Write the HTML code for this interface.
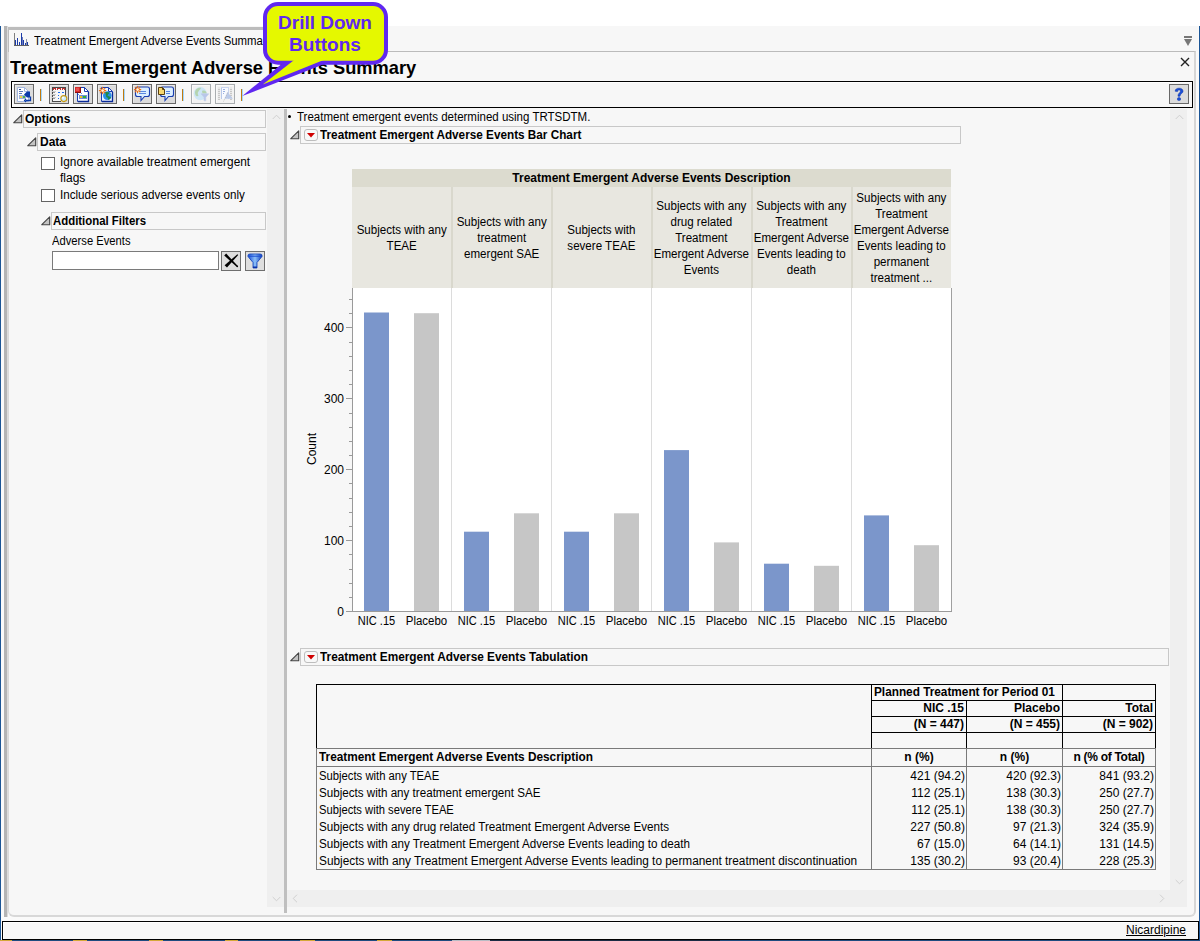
<!DOCTYPE html>
<html><head><meta charset="utf-8">
<style>
*{box-sizing:border-box;margin:0;padding:0}
html,body{width:1200px;height:941px;overflow:hidden;background:#fff;font-family:"Liberation Sans",sans-serif;font-size:12px;color:#000}
.a{position:absolute}
.t{position:absolute;white-space:nowrap;line-height:16px}
.b{font-weight:bold}
.hb{position:absolute;border:1px solid #c8c8c8;background:#f7f7f7}
.tri{position:absolute;width:0;height:0}
.btn{position:absolute;width:20px;height:20px;border:1px solid #7a7a7a;background:#dcdcdc}
.btnd{border-color:#b8b8b8;background:#ededed}
.sep{position:absolute;width:2px;height:13px;background:#c08020;top:89px}
</style></head>
<body>
<!-- window edges -->
<div class="a" style="left:0;top:26px;width:1px;height:915px;background:#1b5596"></div>
<div class="a" style="left:1199px;top:26px;width:1px;height:915px;background:#1b5596"></div>
<div class="a" style="left:1px;top:26px;width:1198px;height:915px;background:#fafafa"></div>
<div class="a" style="left:4px;top:26px;width:3px;height:891px;background:#b4b4b4"></div>
<div class="a" style="left:7px;top:26px;width:1px;height:891px;background:#dcdcdc"></div>
<!-- tab strip background -->
<div class="a" style="left:8px;top:26px;width:1190px;height:25px;background:#f7f7f7"></div>
<!-- main panel -->
<div class="a" style="left:8px;top:51px;width:1188px;height:866px;background:#f7f7f7;border:1px solid #dadada;border-top-color:#bbb;border-right:2px solid #d6d6d6;border-bottom:2px solid #d8d8d8;border-radius:0 0 6px 6px"></div>
<!-- tab -->
<div class="a" style="left:8px;top:27px;width:262px;height:25px;background:#f7f7f7;border-top:3px solid #bcbcbc;border-left:1px solid #bcbcbc"></div>
<svg class="a" style="left:14px;top:33px" width="16" height="13" viewBox="14 33 16 13"><rect x="14" y="33" width="1" height="13" fill="#808080"/><rect x="14" y="45" width="15" height="1" fill="#606060"/><rect x="15" y="40" width="1" height="5" fill="#1a3aa8"/><rect x="17" y="38" width="1" height="7" fill="#1a3aa8"/><rect x="19" y="42" width="1" height="3" fill="#1a3aa8"/><rect x="21" y="33" width="1" height="12" fill="#1a3aa8"/><rect x="22" y="37" width="1" height="8" fill="#6a7ab8"/><rect x="23" y="40" width="1" height="5" fill="#1a3aa8"/><rect x="25" y="43" width="1" height="2" fill="#1a3aa8"/><rect x="26" y="39" width="1" height="6" fill="#8a92a8"/><rect x="27" y="42" width="1" height="3" fill="#1a3aa8"/></svg>
<div class="t" style="left:34px;top:33px;transform:scaleX(0.95);transform-origin:0 0">Treatment Emergent Adverse Events Summary</div>
<!-- tab dropdown -->
<div class="a" style="left:1184px;top:36px;width:8px;height:2px;background:#777"></div>
<div class="tri" style="left:1184px;top:39px;border-left:4px solid transparent;border-right:4px solid transparent;border-top:7px solid #777"></div>

<!-- title -->
<div class="t b" style="left:10px;top:58px;font-size:19px;line-height:20px;transform:scaleX(0.961);transform-origin:0 0">Treatment Emergent Adverse Events Summary</div>
<!-- close x -->
<svg class="a" style="left:1180px;top:57px" width="10" height="10" viewBox="0 0 10 10"><path d="M1 1L9 9M9 1L1 9" stroke="#222" stroke-width="1.4"/></svg>

<!-- toolbar -->
<div class="a" style="left:11px;top:81px;width:1182px;height:27px;border:1px solid #000;box-shadow:inset 1px 1px 0 #fff;background:#f7f7f7"></div>
<svg class="a" style="left:14px;top:84px" width="20" height="20" viewBox="0 0 20 20"><rect x="0.5" y="0.5" width="19" height="19" fill="#dcdcdc" stroke="#686868"/><path d="M1.5 18.5V1.5H18.5" fill="none" stroke="#e9e9e9"/><path d="M3.5 3.5H10.5L14.5 7.5V17.5H3.5Z" fill="#fff" stroke="#a4b8e0"/><path d="M10.5 3.5V7.5H14.5" fill="none" stroke="#a4b8e0"/><g shape-rendering="crispEdges"><rect x="5" y="5" width="2" height="1" fill="#2a4a98"/><rect x="5" y="7" width="4" height="1" fill="#5a78b8"/><rect x="5" y="9" width="3" height="1" fill="#5a78b8"/><rect x="5" y="11" width="7" height="4" fill="#9fb2d8"/><rect x="6" y="12" width="2" height="2" fill="#f2d24a"/><rect x="9" y="12" width="2" height="2" fill="#4cb04c"/></g><path d="M10 10.5L13 7.5H16V13.5H13Z" fill="#0a3aa8"/><path d="M16.5 12.5V16.5H11.5" fill="none" stroke="#0a3aa8" stroke-width="1.3"/><path d="M12 15L10.5 16.5L12 18" fill="none" stroke="#0a3aa8" stroke-width="1.1"/></svg>
<div class="a" style="left:40px;top:89px;width:1px;height:12px;background:#c07a10"></div><div class="a" style="left:41px;top:89px;width:1px;height:12px;background:#9fd6ff"></div>
<svg class="a" style="left:49px;top:84px" width="20" height="20" viewBox="0 0 20 20"><rect x="0.5" y="0.5" width="19" height="19" fill="#dcdcdc" stroke="#686868"/><path d="M1.5 18.5V1.5H18.5" fill="none" stroke="#e9e9e9"/><g shape-rendering="crispEdges"><rect x="3" y="3" width="14" height="15" fill="#f6f6f6"/><path d="M3.5 18V3.5H16.5V12" fill="none" stroke="#4a4a4a"/><path d="M3.5 17.5H12" stroke="#4a4a4a"/><rect x="4" y="4" width="3" height="2" fill="#c03030"/><rect x="8" y="4" width="4" height="2" fill="#c03030"/><rect x="13" y="4" width="3" height="2" fill="#c03030"/><rect x="5" y="5" width="1" height="1" fill="#fff"/><rect x="9" y="5" width="2" height="1" fill="#fff"/><rect x="14" y="5" width="1" height="1" fill="#fff"/><rect x="4" y="8" width="2" height="1" fill="#999"/><rect x="4" y="11" width="2" height="1" fill="#999"/><rect x="4" y="14" width="2" height="1" fill="#999"/><rect x="3" y="7" width="4" height="1" fill="#ccc"/><rect x="3" y="10" width="4" height="1" fill="#ccc"/><rect x="3" y="13" width="4" height="1" fill="#ccc"/><rect x="9" y="8" width="2" height="1" fill="#1a6ef0"/><rect x="13" y="8" width="2" height="1" fill="#1a6ef0"/><rect x="9" y="11" width="1" height="1" fill="#1a6ef0"/><rect x="9" y="14" width="1" height="1" fill="#1a6ef0"/></g><circle cx="14.8" cy="14.6" r="3" fill="#c8ecff" stroke="#c89a10" stroke-width="1.1"/><circle cx="14" cy="13.8" r="1" fill="#fff"/></svg>
<svg class="a" style="left:73px;top:84px" width="20" height="20" viewBox="0 0 20 20"><rect x="0.5" y="0.5" width="19" height="19" fill="#dcdcdc" stroke="#686868"/><path d="M1.5 18.5V1.5H18.5" fill="none" stroke="#e9e9e9"/><path d="M4.5 3.5H11.5L15.5 7.5V17.5H4.5Z" fill="#fff" stroke="#1a3fb0"/><path d="M11.5 3.5V7.5H15.5" fill="none" stroke="#1a3fb0"/><path d="M15.5 8V17.5H5" fill="none" stroke="#0a2a98" stroke-width="1.3"/><g shape-rendering="crispEdges"><rect x="2" y="3" width="6" height="6" fill="#d42a2a"/><rect x="2" y="8" width="6" height="1" fill="#8a1010"/><rect x="7" y="3" width="1" height="6" fill="#8a1010"/><rect x="3" y="4" width="3" height="3" fill="#e85050"/><rect x="6" y="11" width="8" height="4" fill="#6d90d8"/><rect x="7" y="12" width="2" height="2" fill="#f2c020"/><rect x="10" y="12" width="3" height="2" fill="#30b030"/><rect x="8" y="9" width="1" height="1" fill="#6d90d8"/><rect x="5" y="10" width="1" height="1" fill="#6d90d8"/></g></svg>
<svg class="a" style="left:97px;top:84px" width="20" height="20" viewBox="0 0 20 20"><rect x="0.5" y="0.5" width="19" height="19" fill="#dcdcdc" stroke="#686868"/><path d="M1.5 18.5V1.5H18.5" fill="none" stroke="#e9e9e9"/><path d="M4.5 3.5H11.5L15.5 7.5V17.5H4.5Z" fill="#eef4ff" stroke="#1a3fb0"/><path d="M11.5 3.5V7.5H15.5" fill="none" stroke="#1a3fb0"/><path d="M15.5 8V17.5H5" fill="none" stroke="#0a2a98" stroke-width="1.3"/><circle cx="10.3" cy="11.6" r="4.3" fill="#2a90e8"/><path d="M8 8.3C9.5 7.6 11.3 7.8 12.5 8.8C12 10 11 10.3 10.5 11.5C11.5 12.5 13 12.2 14 13.5C13.5 15 12 15.8 11 15.8C11.5 14.5 10.8 13.5 9.5 13.2C8.5 12 9.2 10.5 8 8.3Z" fill="#1f8a4a"/><g stroke="#f07010" stroke-width="1.1" stroke-linecap="round"><path d="M5.6 3.3999999999999995V9.8M2.3999999999999995 6.6H8.8M3.3 4.3L7.8999999999999995 8.899999999999999M7.8999999999999995 4.3L3.3 8.899999999999999"/></g><circle cx="5.6" cy="6.6" r="1.3" fill="#fff4e0"/></svg>
<div class="a" style="left:123px;top:89px;width:1px;height:12px;background:#c07a10"></div><div class="a" style="left:124px;top:89px;width:1px;height:12px;background:#9fd6ff"></div>
<svg class="a" style="left:132px;top:84px" width="20" height="20" viewBox="0 0 20 20"><rect x="0.5" y="0.5" width="19" height="19" fill="#dcdcdc" stroke="#686868"/><path d="M1.5 18.5V1.5H18.5" fill="none" stroke="#e9e9e9"/><path d="M3.5 5C3.5 3.8 4.5 3 5.5 3H15.5C16.5 3 17.5 3.8 17.5 5V10.5C17.5 11.7 16.5 12.5 15.5 12.5H12.5L9 16.6V12.5H5.5C4.5 12.5 3.5 11.7 3.5 10.5Z" fill="#dcefff" stroke="#1a3fb0" stroke-width="1.1"/><g shape-rendering="crispEdges"><rect x="7" y="7" width="7" height="1" fill="#5a88e0"/><rect x="7" y="9" width="7" height="1" fill="#5a88e0"/></g><g stroke="#f07010" stroke-width="1.1" stroke-linecap="round"><path d="M5.6 2.3999999999999995V8.8M2.3999999999999995 5.6H8.8M3.3 3.3L7.8999999999999995 7.8999999999999995M7.8999999999999995 3.3L3.3 7.8999999999999995"/></g><circle cx="5.6" cy="5.6" r="1.3" fill="#fff4e0"/></svg>
<svg class="a" style="left:156px;top:84px" width="20" height="20" viewBox="0 0 20 20"><rect x="0.5" y="0.5" width="19" height="19" fill="#dcdcdc" stroke="#686868"/><path d="M1.5 18.5V1.5H18.5" fill="none" stroke="#e9e9e9"/><path d="M4.5 5C4.5 3.8 5.5 3 6.5 3H15.5C16.5 3 17.5 3.8 17.5 5V10.5C17.5 11.7 16.5 12.5 15.5 12.5H12.5L9 16.6V12.5H6.5C5.5 12.5 4.5 11.7 4.5 10.5Z" fill="#dcefff" stroke="#1a3fb0" stroke-width="1.1"/><g shape-rendering="crispEdges"><rect x="10" y="7" width="4" height="1" fill="#5a88e0"/><rect x="10" y="9" width="4" height="1" fill="#5a88e0"/></g><path d="M2.5 3.5H6.5L8.5 5.5V10.5H2.5Z" fill="#f6d870" stroke="#5a4010"/><path d="M6.5 3.5V5.5H8.5" fill="none" stroke="#5a4010"/></svg>
<div class="a" style="left:182px;top:89px;width:1px;height:12px;background:#c07a10"></div><div class="a" style="left:183px;top:89px;width:1px;height:12px;background:#9fd6ff"></div>
<svg class="a" style="left:191px;top:84px" width="20" height="20" viewBox="0 0 20 20"><rect x="0.5" y="0.5" width="19" height="19" fill="#f2f2f2" stroke="#a9adb0"/><path d="M1.5 18.5V1.5H18.5" fill="none" stroke="#fafafa"/><circle cx="9.3" cy="9.6" r="6.6" fill="#cde6f6"/><path d="M5 5.5C6.5 4 8.5 3.5 10 4C9.5 5.5 8 6 7.5 7.5C6.5 8.5 6.5 10 7.5 11.5C6.5 13 5 12 4.5 11C4 9.5 3.5 7.5 5 5.5Z" fill="#b4d4b0"/><path d="M11 7C12.5 6 14.5 6.5 15.5 8.5V9.5H11.5Z" fill="#b4d4b0"/><path d="M10 9.8H17.8L14.8 13.3V16.8H13V13.3Z" fill="#b8c6ea" stroke="#c0cce8" stroke-width="0.6"/></svg>
<svg class="a" style="left:215px;top:84px" width="20" height="20" viewBox="0 0 20 20"><rect x="0.5" y="0.5" width="19" height="19" fill="#f2f2f2" stroke="#a9adb0"/><path d="M1.5 18.5V1.5H18.5" fill="none" stroke="#fafafa"/><g shape-rendering="crispEdges"><rect x="3" y="3" width="2" height="13" fill="#e8e8e8"/><rect x="15" y="3" width="2" height="13" fill="#e8e8e8"/><rect x="3" y="5" width="2" height="1" fill="#c8c8c8"/><rect x="15" y="5" width="2" height="1" fill="#c8c8c8"/><rect x="3" y="7" width="2" height="1" fill="#c8c8c8"/><rect x="15" y="7" width="2" height="1" fill="#c8c8c8"/><rect x="3" y="9" width="2" height="1" fill="#c8c8c8"/><rect x="15" y="9" width="2" height="1" fill="#c8c8c8"/><rect x="3" y="11" width="2" height="1" fill="#c8c8c8"/><rect x="15" y="11" width="2" height="1" fill="#c8c8c8"/><rect x="3" y="13" width="2" height="1" fill="#c8c8c8"/><rect x="15" y="13" width="2" height="1" fill="#c8c8c8"/><rect x="3" y="15" width="2" height="1" fill="#c8c8c8"/><rect x="15" y="15" width="2" height="1" fill="#c8c8c8"/><rect x="6" y="3" width="8" height="12" fill="#f8faff"/><rect x="6" y="3" width="1" height="12" fill="#b8c8ea"/><rect x="6" y="3" width="8" height="1" fill="#c8d4ee"/><rect x="13" y="3" width="1" height="12" fill="#c8d4ee"/><rect x="8" y="5" width="2" height="1" fill="#9ab0e0"/><rect x="8" y="7" width="2" height="1" fill="#9ab0e0"/><rect x="8" y="9" width="1" height="1" fill="#9ab0e0"/></g><path d="M12.5 8L17.8 14.8H9.5Z" fill="#bccbe9"/><path d="M8.5 17.5L13 8" stroke="#b0b0b0" stroke-width="0.7" stroke-dasharray="1 1"/></svg>
<div class="a" style="left:241px;top:89px;width:1px;height:12px;background:#c07a10"></div><div class="a" style="left:242px;top:89px;width:1px;height:12px;background:#9fd6ff"></div>
<svg class="a" style="left:1169px;top:84px" width="20" height="20" viewBox="0 0 20 20"><rect x="0.5" y="0.5" width="19" height="19" fill="#dcdcdc" stroke="#686868" stroke-width="1"/><path d="M6.2 7.2C6.2 5 8 4.2 10 4.2C12.3 4.2 14 5.3 14 7.2C14 9.3 11.2 9.6 11 12.2H9C8.9 9.2 11.5 8.6 11.5 7.2C11.5 6.3 10.9 5.9 10 5.9C9.1 5.9 8.6 6.4 8.6 7.4Z" fill="#1a4fd8" stroke="#1236a8" stroke-width="0.6"/><ellipse cx="10" cy="15" rx="1.7" ry="1.5" fill="#1a4fd8" stroke="#1236a8" stroke-width="0.5"/></svg>


<!-- left panel -->
<div class="a" style="left:267px;top:109px;width:17px;height:798px;background:#efefef"></div>
<div class="a" style="left:284px;top:109px;width:3px;height:804px;background:#bfbfbf"></div>
<!-- Options -->
<svg class="a" style="left:13px;top:114px" width="10" height="10" viewBox="0 0 10 10"><path d="M0.8 8.7L8.7 0.8V8.7Z" fill="#c4c4c4" stroke="#454545" stroke-width="1.15" stroke-linejoin="round"/></svg>
<div class="hb" style="left:23px;top:110px;width:243px;height:18px"></div>
<div class="t b" style="left:25px;top:111px">Options</div>
<svg class="a" style="left:27px;top:137px" width="10" height="10" viewBox="0 0 10 10"><path d="M0.8 8.7L8.7 0.8V8.7Z" fill="#c4c4c4" stroke="#454545" stroke-width="1.15" stroke-linejoin="round"/></svg>
<div class="hb" style="left:37px;top:133px;width:229px;height:18px"></div>
<div class="t b" style="left:40px;top:134px">Data</div>
<div class="a" style="left:41px;top:157px;width:14px;height:13px;border:1px solid #646464;background:#fff"></div>
<div class="t" style="left:60px;top:154px;transform:scaleX(0.986);transform-origin:0 0">Ignore available treatment emergent</div>
<div class="t" style="left:60px;top:170px">flags</div>
<div class="a" style="left:41px;top:189px;width:14px;height:13px;border:1px solid #646464;background:#fff"></div>
<div class="t" style="left:60px;top:187px;transform:scaleX(0.969);transform-origin:0 0">Include serious adverse events only</div>
<svg class="a" style="left:41px;top:216px" width="10" height="10" viewBox="0 0 10 10"><path d="M0.8 8.7L8.7 0.8V8.7Z" fill="#c4c4c4" stroke="#454545" stroke-width="1.15" stroke-linejoin="round"/></svg>
<div class="hb" style="left:51px;top:212px;width:215px;height:18px"></div>
<div class="t b" style="left:53px;top:213px;transform:scaleX(0.949);transform-origin:0 0">Additional Filters</div>
<div class="t" style="left:52px;top:233px;transform:scaleX(0.934);transform-origin:0 0">Adverse Events</div>
<div class="a" style="left:52px;top:251px;width:167px;height:19px;border:1px solid #7a7a7a;background:#fff"></div>
<svg class="a" style="left:221px;top:251px" width="20" height="20" viewBox="0 0 20 20"><rect x="0.5" y="0.5" width="19" height="19" fill="#dedede" stroke="#6e6e6e"/><path d="M3.2 4.6L5.2 2.6L16.6 14.8L15.6 15.8Z" fill="#000"/><path d="M16.4 3.2L17.2 4L6 16.6L3.6 14.2Z" fill="#000"/><circle cx="16.3" cy="15.4" r="0.8" fill="#000"/></svg>
<svg class="a" style="left:245px;top:251px" width="20" height="20" viewBox="0 0 20 20"><rect x="0.5" y="0.5" width="19" height="19" fill="#dedede" stroke="#6e6e6e"/><defs><linearGradient id="fg" x1="0" y1="0" x2="1" y2="0"><stop offset="0" stop-color="#1a50d8"/><stop offset="0.5" stop-color="#8cc0f8"/><stop offset="1" stop-color="#1040c0"/></linearGradient></defs><path d="M3 4.5Q3 3 5 3H15Q17 3 17 4.5V5.5L12 11.5V17H8V11.5L3 5.5Z" fill="url(#fg)" stroke="#0a3cb8" stroke-width="0.8"/><path d="M4 5.2H16" stroke="#1a4ad0" stroke-width="1"/><rect x="8" y="15.5" width="4" height="1.5" fill="#0a30a8"/></svg>
<!-- left scroll arrows -->
<svg class="a" style="left:272px;top:114px" width="9" height="6" viewBox="0 0 9 6"><path d="M0.7 5L4.5 1.2L8.3 5" fill="none" stroke="#cfcfcf" stroke-width="1"/></svg>
<svg class="a" style="left:272px;top:896px" width="9" height="6" viewBox="0 0 9 6"><path d="M0.7 1L4.5 4.8L8.3 1" fill="none" stroke="#cfcfcf" stroke-width="1"/></svg>


<!-- right panel -->
<div class="a" style="left:1170px;top:109px;width:17px;height:798px;background:#efefef"></div>
<div class="a" style="left:287px;top:890px;width:900px;height:17px;background:#efefef"></div>
<div class="a" style="left:288px;top:115px;width:3px;height:3px;border-radius:50%;background:#000"></div>
<div class="t" style="left:297px;top:109px;transform:scaleX(0.959);transform-origin:0 0">Treatment emergent events determined using TRTSDTM.</div>
<svg class="a" style="left:290px;top:130px" width="10" height="10" viewBox="0 0 10 10"><path d="M0.8 8.7L8.7 0.8V8.7Z" fill="#c4c4c4" stroke="#454545" stroke-width="1.15" stroke-linejoin="round"/></svg><div class="hb" style="left:300px;top:126px;width:661px;height:18px"></div><svg class="a" style="left:304px;top:129px" width="14" height="12" viewBox="0 0 14 12"><rect x="0.5" y="0.5" width="13" height="11" rx="2.5" fill="#f8f8f8" stroke="#bdbdbd"/><path d="M3 4H11L7 8.5Z" fill="#d00000"/></svg><div class="t b" style="left:320px;top:127px;transform:scaleX(0.979);transform-origin:0 0">Treatment Emergent Adverse Events Bar Chart</div>
<div class="a" style="left:352px;top:169px;width:599px;height:18px;background:#dcdbcf"></div>
<div class="t b" style="left:352px;top:170px;width:599px;text-align:center">Treatment Emergent Adverse Events Description</div>
<div class="a" style="left:352px;top:187px;width:99px;height:101px;background:#e8e7e0;display:flex;align-items:center;justify-content:center;text-align:center;line-height:16px;white-space:nowrap"><div style="transform:scaleX(0.965)">Subjects with any<br>TEAE</div></div>
<div class="a" style="left:452px;top:187px;width:99px;height:101px;background:#e8e7e0;display:flex;align-items:center;justify-content:center;text-align:center;line-height:16px;white-space:nowrap"><div style="transform:scaleX(0.965)">Subjects with any<br>treatment<br>emergent SAE</div></div>
<div class="a" style="left:451px;top:187px;width:2px;height:101px;background:#d9d8cd"></div>
<div class="a" style="left:552px;top:187px;width:99px;height:101px;background:#e8e7e0;display:flex;align-items:center;justify-content:center;text-align:center;line-height:16px;white-space:nowrap"><div style="transform:scaleX(0.965)">Subjects with<br>severe TEAE</div></div>
<div class="a" style="left:551px;top:187px;width:2px;height:101px;background:#d9d8cd"></div>
<div class="a" style="left:652px;top:187px;width:99px;height:101px;background:#e8e7e0;display:flex;align-items:center;justify-content:center;text-align:center;line-height:16px;white-space:nowrap"><div style="transform:scaleX(0.965)">Subjects with any<br>drug related<br>Treatment<br>Emergent Adverse<br>Events</div></div>
<div class="a" style="left:651px;top:187px;width:2px;height:101px;background:#d9d8cd"></div>
<div class="a" style="left:752px;top:187px;width:99px;height:101px;background:#e8e7e0;display:flex;align-items:center;justify-content:center;text-align:center;line-height:16px;white-space:nowrap"><div style="transform:scaleX(0.965)">Subjects with any<br>Treatment<br>Emergent Adverse<br>Events leading to<br>death</div></div>
<div class="a" style="left:751px;top:187px;width:2px;height:101px;background:#d9d8cd"></div>
<div class="a" style="left:852px;top:187px;width:99px;height:101px;background:#e8e7e0;display:flex;align-items:center;justify-content:center;text-align:center;line-height:16px;white-space:nowrap"><div style="transform:scaleX(0.965)">Subjects with any<br>Treatment<br>Emergent Adverse<br>Events leading to<br>permanent<br>treatment ...</div></div>
<div class="a" style="left:851px;top:187px;width:2px;height:101px;background:#d9d8cd"></div>
<svg class="a" style="left:300px;top:288px" width="660" height="340" viewBox="300 288 660 340"><rect x="352" y="288" width="600" height="323" fill="#fff"/><line x1="451.5" y1="288" x2="451.5" y2="611" stroke="#dcdcdc" stroke-width="1"/><line x1="551.5" y1="288" x2="551.5" y2="611" stroke="#dcdcdc" stroke-width="1"/><line x1="651.5" y1="288" x2="651.5" y2="611" stroke="#dcdcdc" stroke-width="1"/><line x1="751.5" y1="288" x2="751.5" y2="611" stroke="#dcdcdc" stroke-width="1"/><line x1="851.5" y1="288" x2="851.5" y2="611" stroke="#dcdcdc" stroke-width="1"/><line x1="951.5" y1="288" x2="951.5" y2="611" stroke="#a0a0a0" stroke-width="1"/><rect x="364" y="312.5" width="25" height="298.7" fill="#7b96cb"/><rect x="414" y="313.2" width="25" height="298.0" fill="#c6c6c6"/><rect x="464" y="531.7" width="25" height="79.5" fill="#7b96cb"/><rect x="514" y="513.3" width="25" height="97.9" fill="#c6c6c6"/><rect x="564" y="531.7" width="25" height="79.5" fill="#7b96cb"/><rect x="614" y="513.3" width="25" height="97.9" fill="#c6c6c6"/><rect x="664" y="450.1" width="25" height="161.1" fill="#7b96cb"/><rect x="714" y="542.4" width="25" height="68.8" fill="#c6c6c6"/><rect x="764" y="563.7" width="25" height="47.5" fill="#7b96cb"/><rect x="814" y="565.8" width="25" height="45.4" fill="#c6c6c6"/><rect x="864" y="515.4" width="25" height="95.8" fill="#7b96cb"/><rect x="914" y="545.2" width="25" height="66.0" fill="#c6c6c6"/><line x1="352.5" y1="288" x2="352.5" y2="612" stroke="#9a9a9a" stroke-width="1"/><line x1="346" y1="611.5" x2="952" y2="611.5" stroke="#9a9a9a" stroke-width="1"/><line x1="346" y1="611.5" x2="352" y2="611.5" stroke="#9a9a9a" stroke-width="1"/><line x1="349" y1="597.5" x2="352" y2="597.5" stroke="#9a9a9a" stroke-width="1"/><line x1="349" y1="583.5" x2="352" y2="583.5" stroke="#9a9a9a" stroke-width="1"/><line x1="349" y1="569.5" x2="352" y2="569.5" stroke="#9a9a9a" stroke-width="1"/><line x1="349" y1="554.5" x2="352" y2="554.5" stroke="#9a9a9a" stroke-width="1"/><line x1="346" y1="540.5" x2="352" y2="540.5" stroke="#9a9a9a" stroke-width="1"/><line x1="349" y1="526.5" x2="352" y2="526.5" stroke="#9a9a9a" stroke-width="1"/><line x1="349" y1="512.5" x2="352" y2="512.5" stroke="#9a9a9a" stroke-width="1"/><line x1="349" y1="498.5" x2="352" y2="498.5" stroke="#9a9a9a" stroke-width="1"/><line x1="349" y1="483.5" x2="352" y2="483.5" stroke="#9a9a9a" stroke-width="1"/><line x1="346" y1="469.5" x2="352" y2="469.5" stroke="#9a9a9a" stroke-width="1"/><line x1="349" y1="455.5" x2="352" y2="455.5" stroke="#9a9a9a" stroke-width="1"/><line x1="349" y1="441.5" x2="352" y2="441.5" stroke="#9a9a9a" stroke-width="1"/><line x1="349" y1="427.5" x2="352" y2="427.5" stroke="#9a9a9a" stroke-width="1"/><line x1="349" y1="413.5" x2="352" y2="413.5" stroke="#9a9a9a" stroke-width="1"/><line x1="346" y1="398.5" x2="352" y2="398.5" stroke="#9a9a9a" stroke-width="1"/><line x1="349" y1="384.5" x2="352" y2="384.5" stroke="#9a9a9a" stroke-width="1"/><line x1="349" y1="370.5" x2="352" y2="370.5" stroke="#9a9a9a" stroke-width="1"/><line x1="349" y1="356.5" x2="352" y2="356.5" stroke="#9a9a9a" stroke-width="1"/><line x1="349" y1="342.5" x2="352" y2="342.5" stroke="#9a9a9a" stroke-width="1"/><line x1="346" y1="327.5" x2="352" y2="327.5" stroke="#9a9a9a" stroke-width="1"/><line x1="349" y1="313.5" x2="352" y2="313.5" stroke="#9a9a9a" stroke-width="1"/><line x1="349" y1="299.5" x2="352" y2="299.5" stroke="#9a9a9a" stroke-width="1"/></svg>
<div class="t" style="left:303px;top:604px;width:41px;text-align:right">0</div>
<div class="t" style="left:303px;top:533px;width:41px;text-align:right">100</div>
<div class="t" style="left:303px;top:462px;width:41px;text-align:right">200</div>
<div class="t" style="left:303px;top:391px;width:41px;text-align:right">300</div>
<div class="t" style="left:303px;top:320px;width:41px;text-align:right">400</div>
<div class="t" style="left:292px;top:441px;width:40px;text-align:center;transform:rotate(-90deg)">Count</div>
<div class="t" style="left:349px;top:613px;width:55px;text-align:center;transform:scaleX(0.92)">NIC .15</div>
<div class="t" style="left:399px;top:613px;width:55px;text-align:center;transform:scaleX(0.954)">Placebo</div>
<div class="t" style="left:449px;top:613px;width:55px;text-align:center;transform:scaleX(0.92)">NIC .15</div>
<div class="t" style="left:499px;top:613px;width:55px;text-align:center;transform:scaleX(0.954)">Placebo</div>
<div class="t" style="left:549px;top:613px;width:55px;text-align:center;transform:scaleX(0.92)">NIC .15</div>
<div class="t" style="left:599px;top:613px;width:55px;text-align:center;transform:scaleX(0.954)">Placebo</div>
<div class="t" style="left:649px;top:613px;width:55px;text-align:center;transform:scaleX(0.92)">NIC .15</div>
<div class="t" style="left:699px;top:613px;width:55px;text-align:center;transform:scaleX(0.954)">Placebo</div>
<div class="t" style="left:749px;top:613px;width:55px;text-align:center;transform:scaleX(0.92)">NIC .15</div>
<div class="t" style="left:799px;top:613px;width:55px;text-align:center;transform:scaleX(0.954)">Placebo</div>
<div class="t" style="left:849px;top:613px;width:55px;text-align:center;transform:scaleX(0.92)">NIC .15</div>
<div class="t" style="left:899px;top:613px;width:55px;text-align:center;transform:scaleX(0.954)">Placebo</div>
<svg class="a" style="left:290px;top:652px" width="10" height="10" viewBox="0 0 10 10"><path d="M0.8 8.7L8.7 0.8V8.7Z" fill="#c4c4c4" stroke="#454545" stroke-width="1.15" stroke-linejoin="round"/></svg><div class="hb" style="left:300px;top:648px;width:869px;height:18px"></div><svg class="a" style="left:304px;top:651px" width="14" height="12" viewBox="0 0 14 12"><rect x="0.5" y="0.5" width="13" height="11" rx="2.5" fill="#f8f8f8" stroke="#bdbdbd"/><path d="M3 4H11L7 8.5Z" fill="#d00000"/></svg><div class="t b" style="left:320px;top:649px;transform:scaleX(0.985);transform-origin:0 0">Treatment Emergent Adverse Events Tabulation</div>
<div class="a" style="left:316px;top:684px;width:840px;height:1px;background:#000"></div>
<div class="a" style="left:871px;top:700px;width:285px;height:1px;background:#000"></div>
<div class="a" style="left:871px;top:716px;width:285px;height:1px;background:#000"></div>
<div class="a" style="left:871px;top:732px;width:285px;height:1px;background:#000"></div>
<div class="a" style="left:316px;top:684px;width:1px;height:65px;background:#000"></div>
<div class="a" style="left:871px;top:684px;width:1px;height:65px;background:#000"></div>
<div class="a" style="left:1062px;top:684px;width:1px;height:65px;background:#000"></div>
<div class="a" style="left:1155px;top:684px;width:1px;height:65px;background:#000"></div>
<div class="a" style="left:966px;top:700px;width:1px;height:49px;background:#000"></div>
<div class="a" style="left:316px;top:748px;width:840px;height:1px;background:#7a7a7a"></div>
<div class="a" style="left:316px;top:766px;width:840px;height:1px;background:#7a7a7a"></div>
<div class="a" style="left:316px;top:869px;width:840px;height:1px;background:#7a7a7a"></div>
<div class="a" style="left:316px;top:748px;width:1px;height:122px;background:#7a7a7a"></div>
<div class="a" style="left:871px;top:748px;width:1px;height:122px;background:#7a7a7a"></div>
<div class="a" style="left:966px;top:748px;width:1px;height:122px;background:#7a7a7a"></div>
<div class="a" style="left:1062px;top:748px;width:1px;height:122px;background:#7a7a7a"></div>
<div class="a" style="left:1155px;top:748px;width:1px;height:122px;background:#7a7a7a"></div>
<div class="t b" style="left:874px;top:684px;transform:scaleX(0.983);transform-origin:0 0">Planned Treatment for Period 01</div>
<div class="t b" style="left:764px;top:700px;width:200px;text-align:right">NIC .15</div>
<div class="t b" style="left:860px;top:700px;width:200px;text-align:right">Placebo</div>
<div class="t b" style="left:953px;top:700px;width:200px;text-align:right">Total</div>
<div class="t b" style="left:764px;top:716px;width:200px;text-align:right">(N = 447)</div>
<div class="t b" style="left:860px;top:716px;width:200px;text-align:right">(N = 455)</div>
<div class="t b" style="left:953px;top:716px;width:200px;text-align:right">(N = 902)</div>
<div class="t b" style="left:319px;top:749px;transform:scaleX(0.984);transform-origin:0 0">Treatment Emergent Adverse Events Description</div>
<div class="t b" style="left:872px;top:749px;width:94px;text-align:center">n (%)</div>
<div class="t b" style="left:967px;top:749px;width:95px;text-align:center">n (%)</div>
<div class="t b" style="left:1063px;top:749px;width:92px;text-align:center;letter-spacing:-0.3px">n (% of Total)</div>
<div class="t" style="left:319px;top:768px;transform:scaleX(0.94);transform-origin:0 0">Subjects with any TEAE</div>
<div class="t" style="left:765px;top:768px;width:200px;text-align:right">421 (94.2)</div>
<div class="t" style="left:861px;top:768px;width:200px;text-align:right">420 (92.3)</div>
<div class="t" style="left:954px;top:768px;width:200px;text-align:right">841 (93.2)</div>
<div class="t" style="left:319px;top:785px;transform:scaleX(0.968);transform-origin:0 0">Subjects with any treatment emergent SAE</div>
<div class="t" style="left:765px;top:785px;width:200px;text-align:right">112 (25.1)</div>
<div class="t" style="left:861px;top:785px;width:200px;text-align:right">138 (30.3)</div>
<div class="t" style="left:954px;top:785px;width:200px;text-align:right">250 (27.7)</div>
<div class="t" style="left:319px;top:802px;transform:scaleX(0.933);transform-origin:0 0">Subjects with severe TEAE</div>
<div class="t" style="left:765px;top:802px;width:200px;text-align:right">112 (25.1)</div>
<div class="t" style="left:861px;top:802px;width:200px;text-align:right">138 (30.3)</div>
<div class="t" style="left:954px;top:802px;width:200px;text-align:right">250 (27.7)</div>
<div class="t" style="left:319px;top:819px;transform:scaleX(0.972);transform-origin:0 0">Subjects with any drug related Treatment Emergent Adverse Events</div>
<div class="t" style="left:765px;top:819px;width:200px;text-align:right">227 (50.8)</div>
<div class="t" style="left:861px;top:819px;width:200px;text-align:right">97 (21.3)</div>
<div class="t" style="left:954px;top:819px;width:200px;text-align:right">324 (35.9)</div>
<div class="t" style="left:319px;top:836px;transform:scaleX(0.972);transform-origin:0 0">Subjects with any Treatment Emergent Adverse Events leading to death</div>
<div class="t" style="left:765px;top:836px;width:200px;text-align:right">67 (15.0)</div>
<div class="t" style="left:861px;top:836px;width:200px;text-align:right">64 (14.1)</div>
<div class="t" style="left:954px;top:836px;width:200px;text-align:right">131 (14.5)</div>
<div class="t" style="left:319px;top:853px;transform:scaleX(0.985);transform-origin:0 0">Subjects with any Treatment Emergent Adverse Events leading to permanent treatment discontinuation</div>
<div class="t" style="left:765px;top:853px;width:200px;text-align:right">135 (30.2)</div>
<div class="t" style="left:861px;top:853px;width:200px;text-align:right">93 (20.4)</div>
<div class="t" style="left:954px;top:853px;width:200px;text-align:right">228 (25.3)</div>
<svg class="a" style="left:1175px;top:114px" width="9" height="6" viewBox="0 0 9 6"><path d="M0.7 5L4.5 1.2L8.3 5" fill="none" stroke="#cfcfcf" stroke-width="1"/></svg>
<svg class="a" style="left:1175px;top:879px" width="9" height="6" viewBox="0 0 9 6"><path d="M0.7 1L4.5 4.8L8.3 1" fill="none" stroke="#cfcfcf" stroke-width="1"/></svg>
<svg class="a" style="left:292px;top:894px" width="6" height="9" viewBox="0 0 6 9"><path d="M5 0.7L1.2 4.5L5 8.3" fill="none" stroke="#cfcfcf" stroke-width="1"/></svg>
<svg class="a" style="left:1159px;top:894px" width="6" height="9" viewBox="0 0 6 9"><path d="M1 0.7L4.8 4.5L1 8.3" fill="none" stroke="#cfcfcf" stroke-width="1"/></svg>

<!-- status bar -->
<div class="a" style="left:2px;top:921px;width:1197px;height:19px;border:1px solid #000;box-shadow:inset 1px 1px 0 #fff;background:#f7f7f7"></div>
<div class="t" style="left:1126px;top:922px;text-decoration:underline">Nicardipine</div>
<div class="a" style="left:0;top:940px;width:1200px;height:1px;background:#1f4c80"></div><div class="a" style="left:490px;top:940px;width:230px;height:1px;background:#1c2c44"></div><div class="a" style="left:0px;top:940px;width:12px;height:1px;background:#d4a838"></div><div class="a" style="left:73px;top:940px;width:14px;height:1px;background:#d4a838"></div><div class="a" style="left:149px;top:940px;width:14px;height:1px;background:#d4a838"></div><div class="a" style="left:225px;top:940px;width:13px;height:1px;background:#d4a838"></div><div class="a" style="left:300px;top:940px;width:15px;height:1px;background:#d4a838"></div><div class="a" style="left:377px;top:940px;width:15px;height:1px;background:#d4a838"></div><div class="a" style="left:452px;top:940px;width:38px;height:1px;background:#b8bcc4"></div>

<svg class="a" style="left:0;top:0" width="400" height="100" viewBox="0 0 400 100">
<path d="M278,2H373A15,15 0 0 1 388,17V49.7A15,15 0 0 1 373,64.7H278A15,15 0 0 1 263,49.7V17A15,15 0 0 1 278,2Z" fill="#6028f0"/>
<path d="M242.25,96L286.6,60L334.7,60Z" fill="#6028f0"/>
<path d="M278,6H373A11,11 0 0 1 384,17V49.8A11,11 0 0 1 373,60.8H278A11,11 0 0 1 267,49.8V17A11,11 0 0 1 278,6Z" fill="#e5f800"/>
<path d="M262.75,84.5L296.7,58L328.6,58Z" fill="#e5f800"/>
<text x="325" y="29" text-anchor="middle" font-family="Liberation Sans" font-weight="bold" font-size="19" fill="#6028f0">Drill Down</text>
<text x="325" y="51" text-anchor="middle" font-family="Liberation Sans" font-weight="bold" font-size="19" fill="#6028f0">Buttons</text>
</svg>
</body></html>
